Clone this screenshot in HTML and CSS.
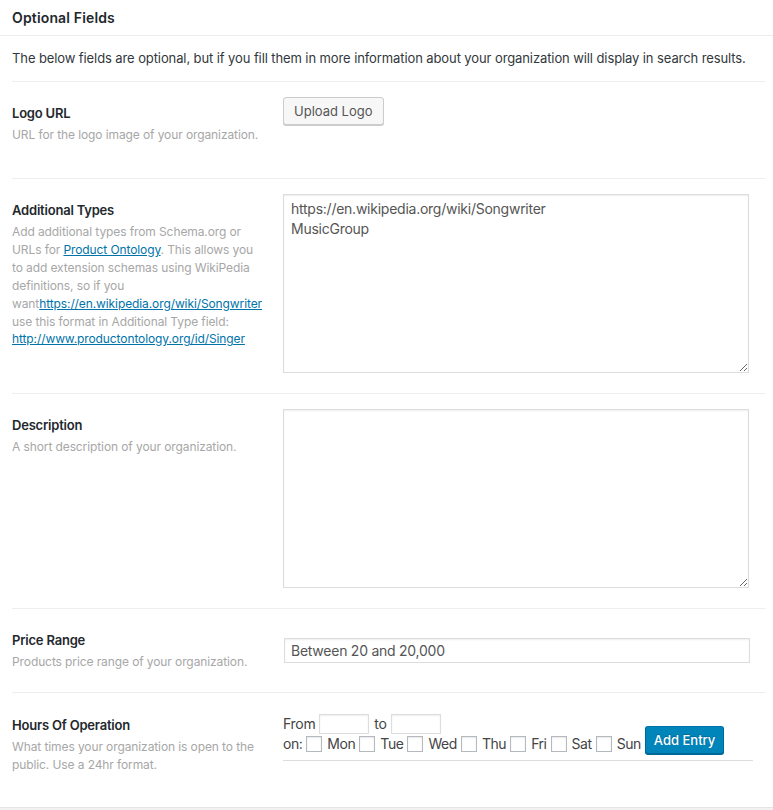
FILE: index.html
```html
<!DOCTYPE html>
<html>
<head>
<meta charset="utf-8">
<title>Optional Fields</title>
<link rel="stylesheet" href="styles.css">
</head>
<body>
<div class="postbox">
  <h2 class="hndle">Optional Fields</h2>
  <div class="inside">
    <p class="intro">The below fields are optional, but if you fill them in more information about your organization will display in search results.</p>
    <div class="form-table">
      <div class="row row-logo">
        <div class="th">
          <label class="label">Logo URL</label>
          <p class="desc">URL for the logo image of your organization.</p>
        </div>
        <div class="td">
          <button class="button" type="button">Upload Logo</button>
        </div>
      </div>
      <div class="row">
        <div class="th">
          <label class="label">Additional Types</label>
          <p class="desc">Add additional types from Schema.org or URLs for <a href="#">Product Ontology</a>. This allows you to add extension schemas using WikiPedia definitions, so if you want<a href="#">https://en.wikipedia.org/wiki/Songwriter</a> use this format in Additional Type field: <a href="#">http://www.productontology.org/id/Singer</a></p>
        </div>
        <div class="td">
          <textarea class="textarea">https://en.wikipedia.org/wiki/Songwriter
MusicGroup</textarea>
        </div>
      </div>
      <div class="row">
        <div class="th">
          <label class="label">Description</label>
          <p class="desc">A short description of your organization.</p>
        </div>
        <div class="td">
          <textarea class="textarea"></textarea>
        </div>
      </div>
      <div class="row row-price">
        <div class="th">
          <label class="label">Price Range</label>
          <p class="desc">Products price range of your organization.</p>
        </div>
        <div class="td td-middle">
          <input class="text-input" type="text" value="Between 20 and 20,000">
        </div>
      </div>
      <div class="row row-hours">
        <div class="th th-hours">
          <label class="label">Hours Of Operation</label>
          <p class="desc">What times your organization is open to the public. Use a 24hr format.</p>
        </div>
        <div class="td td-hours">
          <div class="hours-entry">
            <div class="hours-line">
              <span class="hours-text">From</span>
              <input class="time-input" type="text">
              <span class="hours-text">to</span>
              <input class="time-input" type="text">
            </div>
            <div class="hours-line days">
              <span class="hours-text on">on:</span>
              <input class="check" type="checkbox"><span class="day">Mon</span>
              <input class="check" type="checkbox"><span class="day">Tue</span>
              <input class="check" type="checkbox"><span class="day">Wed</span>
              <input class="check" type="checkbox"><span class="day">Thu</span>
              <input class="check" type="checkbox"><span class="day">Fri</span>
              <input class="check" type="checkbox"><span class="day">Sat</span>
              <input class="check" type="checkbox"><span class="day">Sun</span>
              <button class="button button-primary" type="button">Add Entry</button>
            </div>
          </div>
        </div>
      </div>
    </div>
  </div>
</div>
</body>
</html>
```

FILE: styles.css
```css
* {
  box-sizing: border-box;
}

html, body {
  margin: 0;
  padding: 0;
}

body {
  background: #f1f1f1;
  font-family: Inter, "Liberation Sans", Arial, sans-serif;
  font-size: 13px;
  color: #444;
}

.postbox {
  background: #fff;
  border-bottom: 1px solid #e5e5e5;
  min-height: 808px;
}

.hndle {
  margin: 0;
  height: 36px;
  padding: 0 12px;
  font-size: 14px;
  font-weight: 600;
  line-height: 36px;
  letter-spacing: 0.15px;
  color: #23282d;
  border-bottom: 1px solid #eee;
}

.inside {
  padding: 0 8px 0 12px;
}

.intro {
  margin: 0;
  padding: 12px 0 13px;
  line-height: 20px;
  letter-spacing: -0.1px;
  color: #32373c;
  border-bottom: 1px solid #eee;
}

.row {
  display: flex;
  align-items: flex-start;
  border-bottom: 1px solid #eee;
}

.row-logo {
  min-height: 97px;
}

.row-hours {
  border-bottom: none;
}

.th {
  flex: 0 0 261px;
  min-width: 0;
  padding: 21px 8px 21px 0;
}

.th-hours {
  padding-top: 22px;
}

.label {
  display: block;
  font-weight: 600;
  line-height: 20px;
  letter-spacing: -0.2px;
  color: #23282d;
}

.desc {
  margin: 3px 0 0;
  font-size: 12px;
  line-height: 17.9px;
  letter-spacing: -0.1px;
  color: #a7a7a7;
  overflow-wrap: break-word;
}

.desc a {
  color: #0073aa;
  text-decoration: underline;
}

.td {
  flex: 1;
  min-width: 0;
  padding: 15px 10px 20px;
}

.td-middle {
  align-self: center;
  padding-top: 0;
  padding-bottom: 0;
}

.button {
  display: inline-block;
  height: 28px;
  margin: 0;
  padding: 0 10px;
  font-family: inherit;
  font-size: 13px;
  line-height: 26px;
  color: #555;
  background: #f7f7f7;
  border: 1px solid #ccc;
  border-radius: 3px;
  box-shadow: 0 1px 0 #ccc;
  cursor: pointer;
  white-space: nowrap;
}

.button-primary {
  padding: 0 8px;
  background: #0085ba;
  border-color: #0073aa #006799 #006799;
  box-shadow: 0 1px 0 #006799;
  color: #fff;
  font-weight: 500;
  text-shadow: 0 -1px 1px #006799;
}

.textarea {
  display: block;
  width: 466px;
  height: 179px;
  margin: 0;
  padding: 4px 7px;
  font-family: inherit;
  font-size: 14px;
  line-height: 19.5px;
  letter-spacing: -0.25px;
  color: #555;
  border: 1px solid #ddd;
  box-shadow: inset 0 1px 2px rgba(0, 0, 0, 0.07);
  background: #fff;
  resize: both;
}

.text-input {
  display: block;
  width: 466px;
  height: 25px;
  margin: 0 0 0 1px;
  padding: 0 6px;
  font-family: inherit;
  font-size: 14px;
  letter-spacing: -0.25px;
  color: #555;
  border: 1px solid #ddd;
  box-shadow: inset 0 1px 2px rgba(0, 0, 0, 0.07);
  background: #fff;
}

.td-hours {
  padding-top: 21px;
  padding-bottom: 0;
}

.hours-entry {
  width: 470px;
  padding-bottom: 6px;
  border-bottom: 1px solid #ddd;
}

.hours-line {
  display: flex;
  align-items: center;
  height: 20px;
  font-size: 14px;
  letter-spacing: -0.3px;
  color: #444;
}

.days {
  align-items: flex-end;
  letter-spacing: -0.45px;
}

.hours-text {
  line-height: 21px;
}

.time-input {
  width: 50px;
  height: 20px;
  margin: 0 5px 0 4px;
  padding: 0 3px;
  border: 1px solid #ddd;
  box-shadow: inset 0 1px 2px rgba(0, 0, 0, 0.07);
  font-family: inherit;
  font-size: 13px;
}

.check {
  -webkit-appearance: none;
  appearance: none;
  width: 16px;
  height: 16px;
  margin: 0 5px 2px 4px;
  border: 1px solid #b4b9be;
  background: #fff;
  box-shadow: inset 0 1px 2px rgba(0, 0, 0, 0.1);
  border-radius: 0;
}

.on + .check {
  margin-left: 4px;
}

.day {
  line-height: 20px;
}

.days .button-primary {
  margin-left: 4px;
  letter-spacing: 0;
}
```
